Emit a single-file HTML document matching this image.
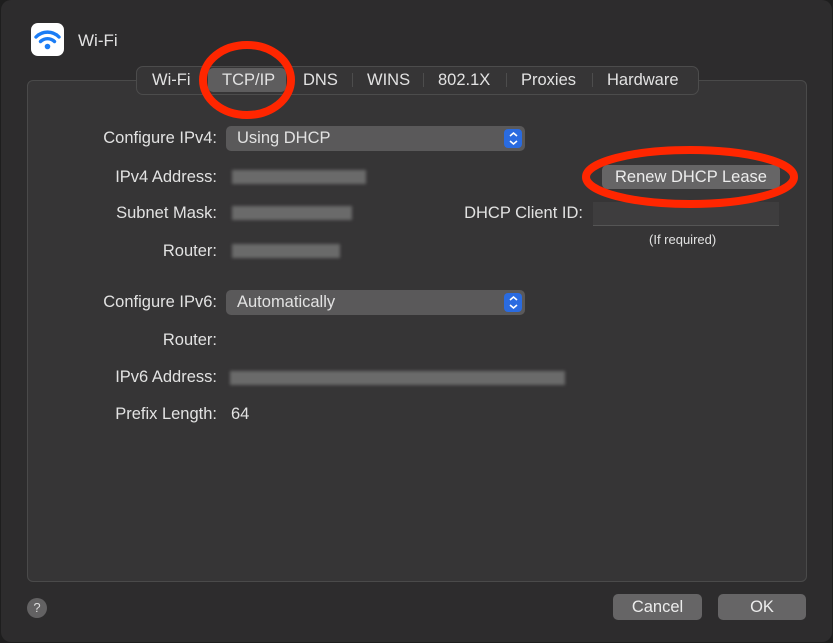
<!DOCTYPE html><html><head><style>
body{margin:0;width:833px;height:643px;background:#1e1e1e;font-family:"Liberation Sans",sans-serif;overflow:hidden;position:relative}
.win{position:absolute;left:1px;top:0;width:831px;height:642px;background:#2d2c2d;border-radius:10px}
.a{position:absolute;color:#e2e2e2;font-size:16.5px;white-space:nowrap}
.r{text-align:right;width:200px}
.panel{position:absolute;left:27px;top:80px;width:778px;height:500px;background:#363536;border:1px solid #4a4a4a;border-radius:6px}
.tabs{position:absolute;left:136px;top:66px;width:561px;height:27px;background:#363536;border:1px solid #4c4c4c;border-radius:7px}
.sel{position:absolute;left:208px;top:68px;width:78px;height:24px;background:#5e5d5e;border-radius:5px}
.sep{position:absolute;top:73px;width:1px;height:14px;background:#4d4d4d}
.pop{position:absolute;left:226px;width:299px;height:25px;background:#5a595a;border-radius:5px}
.pop .st{position:absolute;right:3px;top:3px;width:18px;height:19px;background:#2a6be0;border-radius:4px}
.btn{position:absolute;background:#666566;border-radius:5px;color:#ececec;font-size:16.5px;text-align:center}
.bl{position:absolute;height:14px;background:#6a6a6a;filter:blur(1.5px)}
</style></head><body><div class="win"></div>
<div style="position:absolute;left:31px;top:23px;width:33px;height:33px;background:#fff;border-radius:7px"></div>
<svg style="position:absolute;left:31px;top:23px" width="33" height="33" viewBox="0 0 33 33"><g fill="none" stroke="#1a7cf5" stroke-width="3.4" stroke-linecap="round"><path d="M5 14 A16 16 0 0 1 28 14"/><path d="M9.5 18.5 A10 10 0 0 1 23.5 18.5"/></g><circle cx="16.5" cy="23.5" r="2.8" fill="#1a7cf5"/></svg>
<div class="a" style="left:78px;top:31px;font-size:17px">Wi-Fi</div>
<div class="panel"></div>
<div class="tabs"></div><div class="sel"></div>
<div class="sep" style="left:293px"></div><div class="sep" style="left:352px"></div><div class="sep" style="left:423px"></div><div class="sep" style="left:506px"></div><div class="sep" style="left:592px"></div>
<div class="a" style="left:152px;top:71px">Wi-Fi</div>
<div class="a" style="left:222px;top:71px">TCP/IP</div>
<div class="a" style="left:303px;top:71px">DNS</div>
<div class="a" style="left:367px;top:71px">WINS</div>
<div class="a" style="left:438px;top:71px">802.1X</div>
<div class="a" style="left:521px;top:71px">Proxies</div>
<div class="a" style="left:607px;top:71px">Hardware</div>
<div class="a r" style="left:17px;top:129px">Configure IPv4:</div>
<div class="pop" style="top:126px"><div class="st"></div></div>
<div class="a" style="left:237px;top:129px">Using DHCP</div>
<div class="a r" style="left:17px;top:168px">IPv4 Address:</div>
<div class="bl" style="left:232px;top:170px;width:134px"></div>
<div class="a r" style="left:17px;top:204px">Subnet Mask:</div>
<div class="bl" style="left:232px;top:206px;width:120px"></div>
<div class="a r" style="left:17px;top:242px">Router:</div>
<div class="bl" style="left:232px;top:244px;width:108px"></div>
<div class="btn" style="left:602px;top:165px;width:178px;height:24px;line-height:24px">Renew DHCP Lease</div>
<div class="a r" style="left:383px;top:204px">DHCP Client ID:</div>
<div style="position:absolute;left:593px;top:202px;width:186px;height:23px;background:#3e3d3e;border-bottom:1px solid #555"></div>
<div class="a" style="left:649px;top:232px;font-size:13px">(If required)</div>
<div class="a r" style="left:17px;top:293px">Configure IPv6:</div>
<div class="pop" style="top:290px"><div class="st"></div></div>
<div class="a" style="left:237px;top:293px">Automatically</div>
<div class="a r" style="left:17px;top:331px">Router:</div>
<div class="a r" style="left:17px;top:368px">IPv6 Address:</div>
<div class="bl" style="left:230px;top:371px;width:335px"></div>
<div class="a r" style="left:17px;top:405px">Prefix Length:</div>
<div class="a" style="left:231px;top:405px">64</div>
<svg style="position:absolute;left:505px;top:130px" width="17" height="180"><g fill="none" stroke="#fff" stroke-width="1.6"><path d="M5 6 L8.5 3 L12 6 M5 11 L8.5 14 L12 11"/><path d="M5 170 L8.5 167 L12 170 M5 175 L8.5 178 L12 175"/></g></svg>
<div style="position:absolute;left:27px;top:598px;width:20px;height:20px;border-radius:50%;background:#636263;color:#ddd;font-size:13px;text-align:center;line-height:20px">?</div>
<div class="btn" style="left:613px;top:594px;width:89px;height:26px;line-height:26px">Cancel</div>
<div class="btn" style="left:718px;top:594px;width:88px;height:26px;line-height:26px">OK</div>
<svg style="position:absolute;left:0;top:0" width="833" height="643"><g fill="none" stroke="#ff2600" stroke-width="8"><ellipse cx="247" cy="80" rx="44" ry="35"/><ellipse cx="690" cy="177" rx="104" ry="27"/></g></svg>
</body></html>
